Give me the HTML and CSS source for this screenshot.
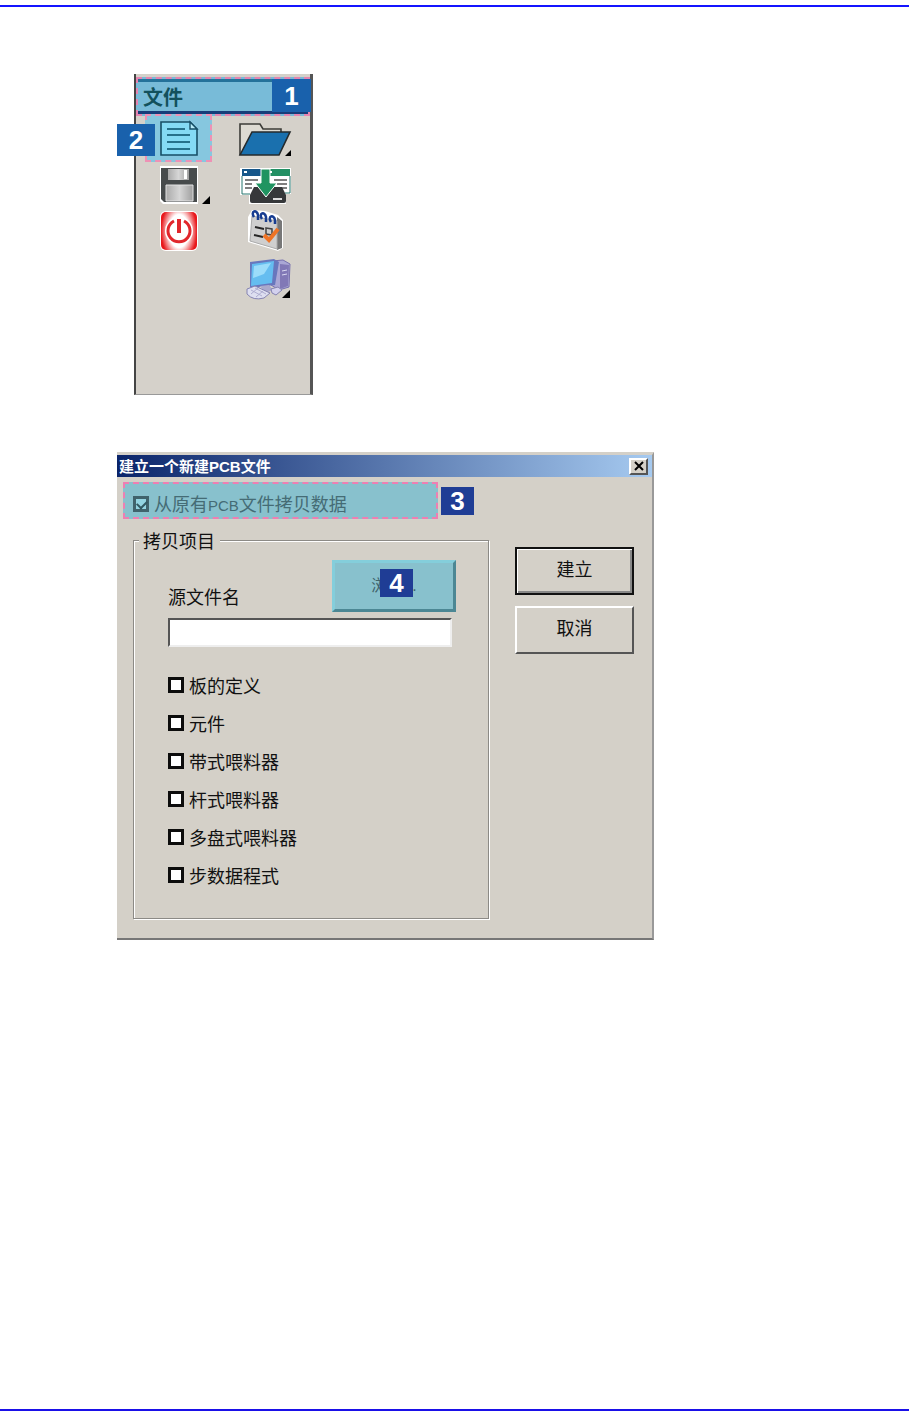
FILE: index.html
```html
<!DOCTYPE html>
<html lang="zh-CN">
<head>
<meta charset="utf-8">
<meta name="viewport" content="width=device-width, initial-scale=1">
<title>建立一个新建PCB文件</title>
<link rel="stylesheet" href="styles.css">
</head>
<body>
<div class="page">
  <main class="content">
    <section class="palette" aria-label="文件">
      <h2 class="palette-title">文件<span class="badge badge-one">1</span></h2>
      <div class="tools">
        <button class="tool selected" type="button" aria-label="新建">
          <svg viewBox="136 116 87 46">
            <path d="M161 122h29l7 7v26h-36z" fill="#84daf4" stroke="#174f66" stroke-width="1.6"/>
            <path d="M190 122v7h7z" fill="#b9eefa" stroke="#174f66" stroke-width="1.4"/>
            <path d="M167 129h18M167 135h23M167 142h23M167 149h23" stroke="#26718b" stroke-width="2"/>
          </svg>
          <span class="badge badge-two">2</span>
        </button>
        <button class="tool" type="button" aria-label="打开">
          <svg viewBox="223 116 87 46">
            <path d="M240 155v-31h20l3 5h18v8" fill="#dedbd3" stroke="#3c3c38" stroke-width="1.6"/>
            <path d="M240 155l12-23h38l-11 23z" fill="#1a70ae" stroke="#252a2c" stroke-width="1.6"/>
            <path d="M291 150v6h-6z"/>
          </svg>
        </button>
        <button class="tool" type="button" aria-label="保存">
          <svg viewBox="136 162 87 46">
            <defs>
              <linearGradient id="metal"><stop stop-color="#aaa"/><stop offset=".5" stop-color="#d6d6d6"/><stop offset="1" stop-color="#a0a0a0"/></linearGradient>
            </defs>
            <path d="M160 166h38v38h-35l-3-3z" fill="#fff"/>
            <path d="M161 168h36v34h-33l-3-3z" fill="#474b4c"/>
            <path d="M168 169h21v11h-21z" fill="url(#metal)"/>
            <path d="M184 170h3v9h-3z" fill="#fff"/>
            <path d="M166 185h27v16h-27z" fill="url(#metal)" stroke="#e3e3e3"/>
            <path d="M210 196v8h-8z"/>
          </svg>
        </button>
        <button class="tool" type="button" aria-label="导入">
          <svg viewBox="223 162 87 46">
            <path d="M240 168h51v26h-5v10h-37v-9h-9z" fill="#fff"/>
            <path d="M242 169h22v7h-22z" fill="#17578a"/>
            <path d="M267 169h23v7h-23z" fill="#239064"/>
            <path d="M242 176v18h8M290 176v17h-5" fill="none" stroke="#26776f"/>
            <path d="M244 172h3M269 172h3" stroke="#fff" stroke-width="2"/>
            <path d="M245 180h13M245 184h7M245 188h7M274 180h13M277 184h10M280 188h7" stroke="#555" stroke-width="1.5"/>
            <path d="M254 187h28l4 8v6q0 2-2 2h-32q-2 0-2-2v-6z" fill="#36383a"/>
            <path d="M261 169h9v14h7l-11 14-11-14h6z" fill="#209461" stroke="#fff"/>
            <path d="M273 199h9" stroke="#ddd" stroke-width="2"/>
          </svg>
        </button>
        <button class="tool" type="button" aria-label="退出">
          <svg viewBox="136 208 87 46">
            <defs>
              <radialGradient id="glow" gradientUnits="userSpaceOnUse" cx="0" cy="0" r="1" gradientTransform="translate(179 231) scale(18 30)"><stop stop-color="#fff"/><stop offset=".55" stop-color="#fff"/><stop offset="1" stop-color="#e8191d"/></radialGradient>
            </defs>
            <rect x="160" y="211" width="38" height="40" rx="6" fill="#fff"/>
            <rect x="161" y="212" width="36" height="38" rx="5" fill="url(#glow)"/>
            <circle cx="179" cy="231" r="14" fill="#fff"/>
            <path d="M174 221a11 11 0 1 0 10 0" fill="none" stroke="#e1262c" stroke-width="3"/>
            <path d="M179 219v14" stroke="#e1262c" stroke-width="4"/>
          </svg>
        </button>
        <button class="tool" type="button" aria-label="编辑">
          <svg viewBox="223 208 87 46">
            <path d="M248 217l4-7 13 1 13 4 5 5v28l-5 3-30-9z" fill="#fff"/>
            <path d="M277 217l5 4v27l-5 2z" fill="#777"/>
            <path d="M252 216l25 5v28l-27-8z" fill="#cfcfcf" stroke="#aaa"/>
            <path d="M254 217c-4-6 3-8 4-2v5M262 219c-4-6 3-8 4-2v5M271 222c-4-6 3-8 4-2v4" fill="none" stroke="#173d91" stroke-width="2.5"/>
            <path d="M255 227l9 2M254 235l9 2" stroke="#252525" stroke-width="2"/>
            <path d="M266 228l6 1v6l-6-1z" fill="none" stroke="#444" stroke-width="1.5"/>
            <path d="M264 235l5 5 9-11" fill="none" stroke="#ef7426" stroke-width="4"/>
          </svg>
        </button>
        <button class="tool last" type="button" aria-label="计算机">
          <svg viewBox="223 254 87 46">
            <path d="M272 261l11-1 7 4-1 23-10 3-8-5z" fill="#aaa7d5" stroke="#7770ae"/>
            <path d="M280 264l9 1-1 21-8 3z" fill="#8178b6"/>
            <path d="M282 271l5-1M282 275l5-1" stroke="#dad9f1"/>
            <path d="M250 262l24-3 5 3-4 23-25 3z" fill="#6877bd"/>
            <path d="M252 264l22-3-2 22-21 3z" fill="#65bdf0"/>
            <path d="M254 266l17-3-7 11-11 4z" fill="#9cdcfa"/>
            <path d="M260 286l9-1 4 5-8 3z" fill="#aaa9cc"/>
            <path d="M247 289l8-3 15 7-6 5q-11 3-17-4z" fill="#dedff0" stroke="#8583b1"/>
            <path d="M251 290l11 6M255 288l11 6M251 294l7-6M256 297l7-6" stroke="#aeadd0"/>
            <path d="M271 289l7-2 4 3-6 5-4-2z" fill="#d3d1ee" stroke="#8583b1"/>
            <path d="M290 290v8h-8z"/>
          </svg>
        </button>
      </div>
    </section>

    <section class="dialog" role="dialog" aria-labelledby="dialog-title">
      <header class="titlebar">
        <h1 class="title" id="dialog-title">建立一个新建<span class="latin">PCB</span>文件</h1>
        <button class="close" type="button" aria-label="关闭">
          <svg viewBox="0 0 10 10"><path d="M1 1l8 8M9 1L1 9" stroke="#000" stroke-width="2"/></svg>
        </button>
      </header>
      <form class="form">
        <div class="copy-row">
          <label class="copy"><input class="check copy-check" type="checkbox" checked><span>从原有<span class="latin">PCB</span>文件拷贝数据</span></label>
          <span class="badge">3</span>
        </div>
        <div class="columns">
          <fieldset class="group">
            <legend class="legend">拷贝项目</legend>
            <div class="source">
              <label class="source-label" for="source">源文件名</label>
              <button class="browse" type="button">浏览...<span class="badge badge-four">4</span></button>
            </div>
            <input class="source-input" id="source" type="text">
            <div class="options">
              <label class="option"><input class="check" type="checkbox">板的定义</label>
              <label class="option"><input class="check" type="checkbox">元件</label>
              <label class="option"><input class="check" type="checkbox">带式喂料器</label>
              <label class="option"><input class="check" type="checkbox">杆式喂料器</label>
              <label class="option"><input class="check" type="checkbox">多盘式喂料器</label>
              <label class="option"><input class="check" type="checkbox">步数据程式</label>
            </div>
          </fieldset>
          <div class="actions">
            <button class="action default" type="submit">建立</button>
            <button class="action" type="button">取消</button>
          </div>
        </div>
      </form>
    </section>
  </main>
</div>
</body>
</html>
```
FILE: styles.css
```css
* {
  box-sizing: border-box;
}

body {
  margin: 0;
  background: #fff;
  color: #111;
  font: 18px/26px "Noto Sans CJK SC", sans-serif;
}

button,
input {
  margin: 0;
  padding: 0;
  color: inherit;
  font: inherit;
}

.latin {
  font-family: "Liberation Sans", sans-serif;
  font-size: 15px;
}

.page {
  display: flex;
  flex-direction: column;
  min-height: 100vh;
  padding: 5px 0 10px;
}

.content {
  flex: 1;
  padding: 67px 16px 67px 117px;
  border-top: 2px solid #1414ff;
  border-bottom: 2px solid #1a10e8;
}

.badge {
  display: flex;
  align-items: center;
  justify-content: center;
  width: 33px;
  height: 28px;
  background: #1f3d95;
  color: #fff;
  font: bold 26px/28px "Liberation Sans", sans-serif;
}

/* Tool palette */

.palette {
  width: 179px;
  min-height: 321px;
  margin: 0 0 57px 17px;
  padding-top: 3px;
  border: solid #444;
  border-width: 0 3px 1px 2px;
  border-right-color: #555;
  border-bottom-color: #999;
  background: #d5d1ca;
}

.palette-title {
  position: relative;
  margin: 0;
  padding: 4px 5px;
  border: 2px dashed #e584b0;
  background: #78bbd8;
  box-shadow: inset 0 3px #25729a, inset 0 -3px #173d79;
  color: #12515c;
  font-size: 20px;
  line-height: 27px;
}

.badge-one,
.badge-two {
  position: absolute;
  background: #1961ac;
}

.badge-one {
  top: 0;
  right: -3px;
  width: 39px;
  height: 33px;
}

.badge-two {
  top: 8px;
  left: -19px;
  width: 38px;
  height: 32px;
}

.tools {
  display: grid;
  grid-template-columns: 87px 87px;
}

.tool {
  position: relative;
  height: 46px;
  border: 0;
  background: none;
}

.tool svg {
  position: relative;
  display: block;
  width: 87px;
  height: 46px;
}

.tool.selected::before {
  content: "";
  position: absolute;
  inset: -2px 11px 0 9px;
  border: 2px dashed #ee91b5;
  background: #86c7df;
}

.tool.last {
  grid-column: 2;
}

/* Dialog */

.dialog {
  max-width: 537px;
  border: solid #d4d0c8;
  border-width: 3px 2px 2px 0;
  border-right-color: #999;
  border-bottom-color: #777;
  background: #d4d0c8;
}

.titlebar {
  display: flex;
  align-items: center;
  justify-content: space-between;
  height: 22px;
  padding: 0 4px 0 2px;
  background: linear-gradient(90deg, #0a246a, #a6caf0);
}

.title {
  margin: 0;
  color: #fff;
  font-size: 15px;
  line-height: 22px;
}

.close {
  display: grid;
  place-items: center;
  width: 19px;
  height: 17px;
  border: 2px solid;
  border-color: #fff #555 #555 #fff;
  background: #d4d0c8;
}

.close svg {
  width: 10px;
  height: 10px;
}

.form {
  padding: 5px 18px 19px 6px;
}

.copy-row {
  display: flex;
  align-items: center;
  gap: 3px;
}

.copy {
  display: flex;
  flex: 0 1 315px;
  align-items: center;
  gap: 5px;
  height: 37px;
  padding: 7px 8px 0;
  border: 2px dashed #ee7fb2;
  background: #88c1cd;
  color: #456c75;
}

.check {
  flex: none;
  appearance: none;
  width: 16px;
  height: 16px;
  border: 3px solid #0c0c0c;
  background: #fff;
}

.copy-check {
  border-color: #40636c;
  background: #93d4e1;
}

.copy-check:checked::before {
  content: "";
  display: block;
  width: 8px;
  height: 5px;
  margin: 1px;
  border: solid #315861;
  border-width: 0 0 2px 2px;
  transform: rotate(-45deg);
}

.columns {
  display: flex;
  align-items: flex-start;
  gap: 26px;
  padding: 8px 0 0 10px;
}

.group {
  flex: 1;
  min-width: 0;
  margin: 0;
  padding: 7px 32px 24px 34px;
  border: 1px solid #8c8a86;
  box-shadow: 1px 1px #fff, inset 1px 1px #fff;
}

.legend {
  position: relative;
  margin-left: -29px;
  padding: 0 5px 0 4px;
  background: #d4d0c8;
}

.source {
  display: flex;
  align-items: flex-end;
  justify-content: space-between;
  margin-bottom: 6px;
}

.source-label {
  padding-bottom: 3px;
}

.browse {
  position: relative;
  width: 124px;
  height: 52px;
  border: 3px solid;
  border-color: #84cedb #4c8794 #4c8794 #84cedb;
  background: #88c1cd;
  color: #40636c;
  font: 16px/24px "Liberation Sans", "Noto Sans CJK SC", sans-serif;
}

.badge-four {
  position: absolute;
  top: 6px;
  left: 45px;
}

.source-input {
  display: block;
  width: calc(100% - 4px);
  height: 29px;
  padding: 0 4px;
  border: 2px solid;
  border-color: #555 #eee #eee #555;
  background: #fff;
}

.options {
  display: grid;
  margin-top: 19px;
}

.option {
  display: flex;
  align-items: center;
  gap: 5px;
  height: 38px;
}

.actions {
  display: grid;
  flex: none;
  gap: 11px;
  width: 119px;
  padding-top: 20px;
}

.action {
  height: 48px;
  padding-bottom: 6px;
  border: 2px solid;
  border-color: #fff #555 #555 #fff;
  background: #d4d0c8;
}

.action.default {
  border-color: #111;
  box-shadow: inset 1px 1px #fff, inset -2px -2px #888;
}
```
